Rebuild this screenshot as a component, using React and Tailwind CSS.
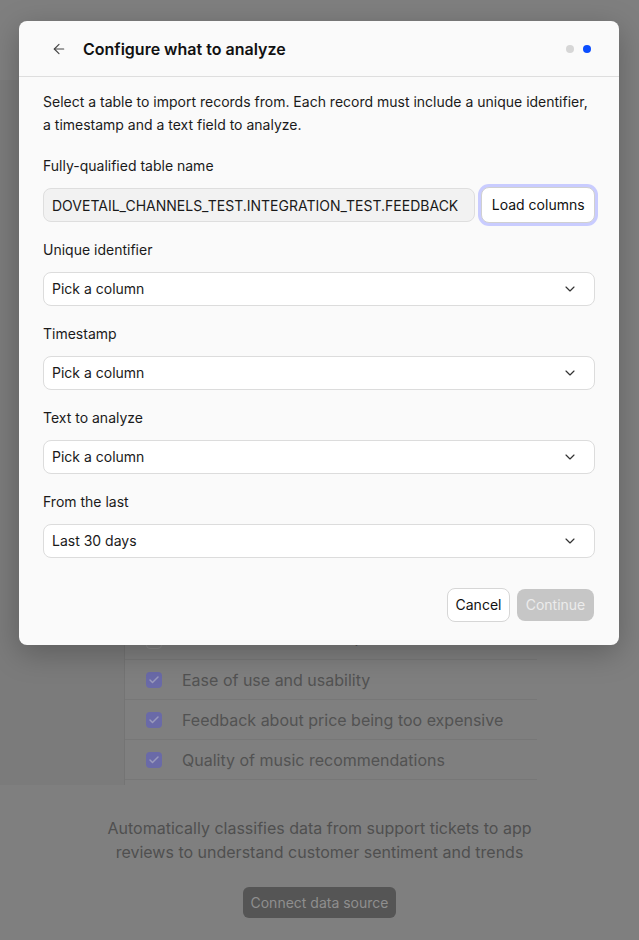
import React from 'react';
import { ArrowLeft, ChevronDown, Check } from 'lucide-react';

const themes = [
    { label: 'Crashes and technical problems', checked: false },
    { label: 'Ease of use and usability', checked: true },
    { label: 'Feedback about price being too expensive', checked: true },
    { label: 'Quality of music recommendations', checked: true },
];

function SelectField({ label, value, className }) {
    return (
        <div className={'flex flex-col ' + className}>
            <label className="text-sm leading-5 text-[#1a1a1a]">{label}</label>
            <button className="mt-3 flex h-[34px] w-full items-center justify-between rounded-lg border border-[#dcdcdc] bg-white pl-2 pr-4 text-sm text-[#1a1a1a]">
                <span>{value}</span>
                <ChevronDown className="h-4 w-4 text-[#333]" strokeWidth={1.75} />
            </button>
        </div>
    );
}

function App() {
    return (
        <div className="relative min-h-[940px] overflow-hidden bg-[#7f7f7f] font-['Inter','Noto_Sans',sans-serif]">
            {/* dimmed page behind the dialog */}
            <div className="h-[80px]" />
            <div className="flex h-[705px]">
                <div className="w-[124px] bg-[#7b7b7b]" />
                <div className="flex flex-1 flex-col justify-end border-l border-[#747474] pb-[5px]">
                    <ul className="w-[412px]">
                        {themes.map((t) => (
                            <li key={t.label} className="flex h-10 items-center border-b border-[#777] pl-[21px]">
                                {t.checked ? (
                                    <span className="flex h-4 w-4 items-center justify-center rounded-[4px] bg-[#6a6aa8]">
                                        <Check className="h-3 w-3 text-[#9a9abc]" strokeWidth={3} />
                                    </span>
                                ) : (
                                    <span className="mt-[3px] h-4 w-4 rounded-[4px] border border-[#8c8c8c]" />
                                )}
                                <span className={t.checked ? 'ml-[20px] text-base text-[#525252]' : 'mb-[6px] ml-[20px] text-base text-[#525252]'}>
                                    {t.label}
                                </span>
                            </li>
                        ))}
                    </ul>
                </div>
            </div>
            <div className="flex flex-col items-center">
                <p className="mt-[31px] w-[440px] text-center text-base leading-6 text-[#4f4f4f]">
                    Automatically classifies data from support tickets to app reviews to understand customer sentiment and trends
                </p>
                <button className="mt-[23px] h-[31px] rounded-md bg-[#555] px-2 text-sm text-[#8f8f8f]">
                    Connect data source
                </button>
            </div>

            {/* dialog */}
            <div className="absolute left-[19px] top-[21px] w-[600px] rounded-lg bg-[#fafafa] shadow-[0_8px_30px_rgba(0,0,0,0.25)]">
                <div className="flex h-14 items-center border-b border-[#dedede] pl-[32px] pr-[28px]">
                    <ArrowLeft className="h-4 w-4 text-[#444]" strokeWidth={1.75} />
                    <h2 className="ml-4 text-base font-semibold text-[#111]">Configure what to analyze</h2>
                    <div className="ml-auto flex items-center gap-[9px]">
                        <span className="h-2 w-2 rounded-full bg-[#d6d6d6]" />
                        <span className="h-2 w-2 rounded-full bg-[#0a4dff]" />
                    </div>
                </div>
                <div className="px-6 pb-[23px] pt-[13px]">
                    <p className="text-sm leading-[23px] text-[#1a1a1a]">
                        Select a table to import records from. Each record must include a unique identifier, a timestamp and a text field to analyze.
                    </p>
                    <div className="mt-5 flex flex-col">
                        <label className="text-sm leading-5 text-[#1a1a1a]">Fully-qualified table name</label>
                        <div className="mt-[11px] flex items-center gap-[6px]">
                            <input
                                readOnly
                                value="DOVETAIL_CHANNELS_TEST.INTEGRATION_TEST.FEEDBACK"
                                className="h-[34px] w-[434px] rounded-lg border border-[#dedede] bg-[#f2f2f2] px-2 text-sm text-[#1a1a1a] outline-none"
                            />
                            <button className="h-9 w-[114px] rounded-lg border border-[#d0d0d0] bg-white text-sm text-[#111] ring-[3px] ring-[#c9ccff]">
                                Load columns
                            </button>
                        </div>
                    </div>
                    <SelectField className="mt-[17px]" label="Unique identifier" value="Pick a column" />
                    <SelectField className="mt-[18px]" label="Timestamp" value="Pick a column" />
                    <SelectField className="mt-[18px]" label="Text to analyze" value="Pick a column" />
                    <SelectField className="mt-[18px]" label="From the last" value="Last 30 days" />
                    <div className="mt-[30px] flex items-center justify-end gap-[7px] pr-px">
                        <button className="h-[34px] w-[63px] rounded-lg border border-[#d6d6d6] bg-white text-sm text-[#111]">
                            Cancel
                        </button>
                        <button disabled className="h-8 w-[77px] rounded-lg bg-[#c6c6c6] text-sm text-[#ececec]">
                            Continue
                        </button>
                    </div>
                </div>
            </div>
        </div>
    );
}

export default App;
